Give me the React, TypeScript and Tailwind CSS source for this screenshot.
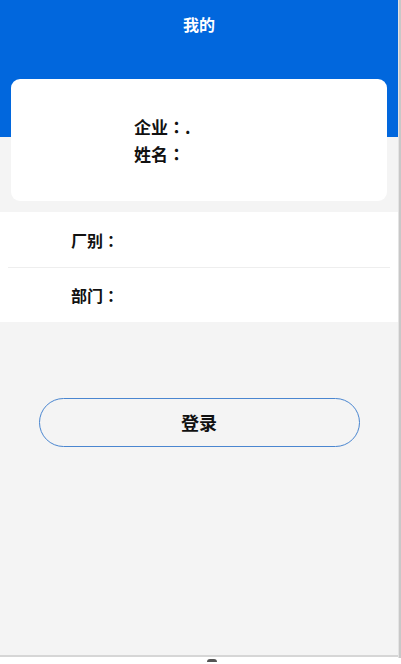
function Colon() {
  return <span style={{ fontFamily: '"Noto Sans CJK TC", sans-serif' }}>：</span>;
}

export default function App() {
  const font = { fontFamily: '"Noto Sans CJK SC", "Noto Sans", sans-serif' };
  return (
    <div className="flex h-[664px] w-[401px] bg-white" style={font}>
      <div className="flex w-[398px] flex-col">
        <div className="flex h-[657px] flex-col border-b-2 border-[#d6d6d6] bg-[#f4f4f4]">
          <div className="flex h-[137px] shrink-0 justify-center bg-[#0167dd] pt-[12px]">
            <span className="text-[16px] font-bold leading-[24px] text-white">我的</span>
          </div>
          <div className="mx-[11px] -mt-[58px] flex h-[122px] flex-col justify-center rounded-[9px] bg-white pl-[123px]">
            <div className="text-[17px] font-bold leading-[27px] text-[#111]">企业<Colon />.</div>
            <div className="text-[17px] font-bold leading-[27px] text-[#111]">姓名<Colon /></div>
          </div>
          <div className="mt-[11px] flex flex-col bg-white">
            <div className="flex h-[55px] items-center pl-[71px] text-[16px] font-bold text-[#111]">厂别<Colon /></div>
            <div className="mx-[8px] h-px bg-[#eeeeee]" />
            <div className="flex h-[54px] items-center pl-[71px] text-[16px] font-bold text-[#111]">部门<Colon /></div>
          </div>
          <div className="mt-[76px] flex justify-center">
            <button className="flex h-[49px] w-[321px] items-center justify-center rounded-full border-[1.5px] border-[#4a86d0] bg-[#f4f4f4] text-[18px] font-bold text-[#111]">
              登录
            </button>
          </div>
        </div>
        <div className="flex justify-center pt-[2px]">
          <div className="ml-[26px] h-[3px] w-[10px] rounded-t-full bg-[#555]" />
        </div>
      </div>
      <div className="h-[658px] w-px bg-[#e4e4e4]" />
      <div className="h-[658px] w-[2px] bg-[#c8c8c8]" />
    </div>
  );
}
